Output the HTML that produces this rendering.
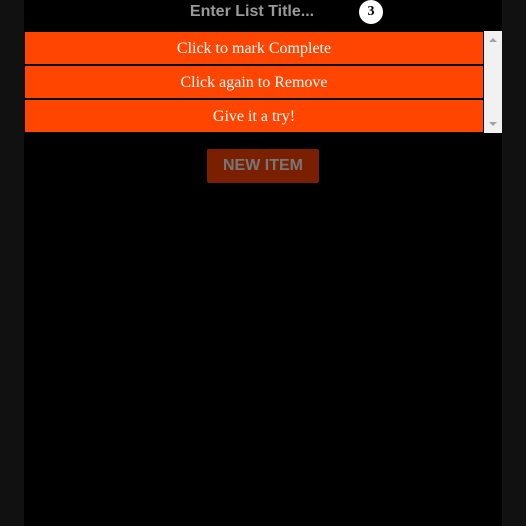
<!DOCTYPE html>
<html><head><style>
body{margin:0;width:526px;height:526px;background:#111;position:relative;overflow:hidden}
.main{position:absolute;left:24px;top:0;width:478px;height:526px;background:#000}
.t{position:absolute;left:0;width:478px;top:3px;text-align:center;font:bold 16px "Liberation Sans",sans-serif;color:#999;padding-right:22px;box-sizing:border-box}
.b{position:absolute;left:335px;top:0px;width:24px;height:24px;border-radius:50%;background:#fff;color:#000;font:bold 14px "Liberation Serif",serif;text-align:center;line-height:24px}
.i{position:absolute;left:1px;width:458px;height:32px;background:#ff4500;color:#fff;font:16px "Liberation Serif",serif;text-align:center;line-height:34px}
.sb{position:absolute;left:460px;top:31px;width:18px;height:102px;background:#f1f1f1}
.sb span{position:absolute;left:5px;width:0;height:0;border-left:4px solid transparent;border-right:4px solid transparent}
.n{position:absolute;left:183px;top:149px;width:112px;height:34px;background:#7a2000;border-radius:2px;color:#777;font:bold 16px "Liberation Sans",sans-serif;text-align:center;line-height:34px}
</style></head><body><div class="main">
<div class="t">Enter List Title...</div><div class="b">3</div>
<div class="i" style="top:32px">Click to mark Complete</div>
<div class="i" style="top:66px">Click again to Remove</div>
<div class="i" style="top:100px">Give it a try!</div>
<div class="sb"><span style="top:7px;border-bottom:4px solid #a3a3a3"></span><span style="top:91px;border-top:4px solid #a3a3a3"></span></div>
<div class="n">NEW ITEM</div>
</div></body></html>
